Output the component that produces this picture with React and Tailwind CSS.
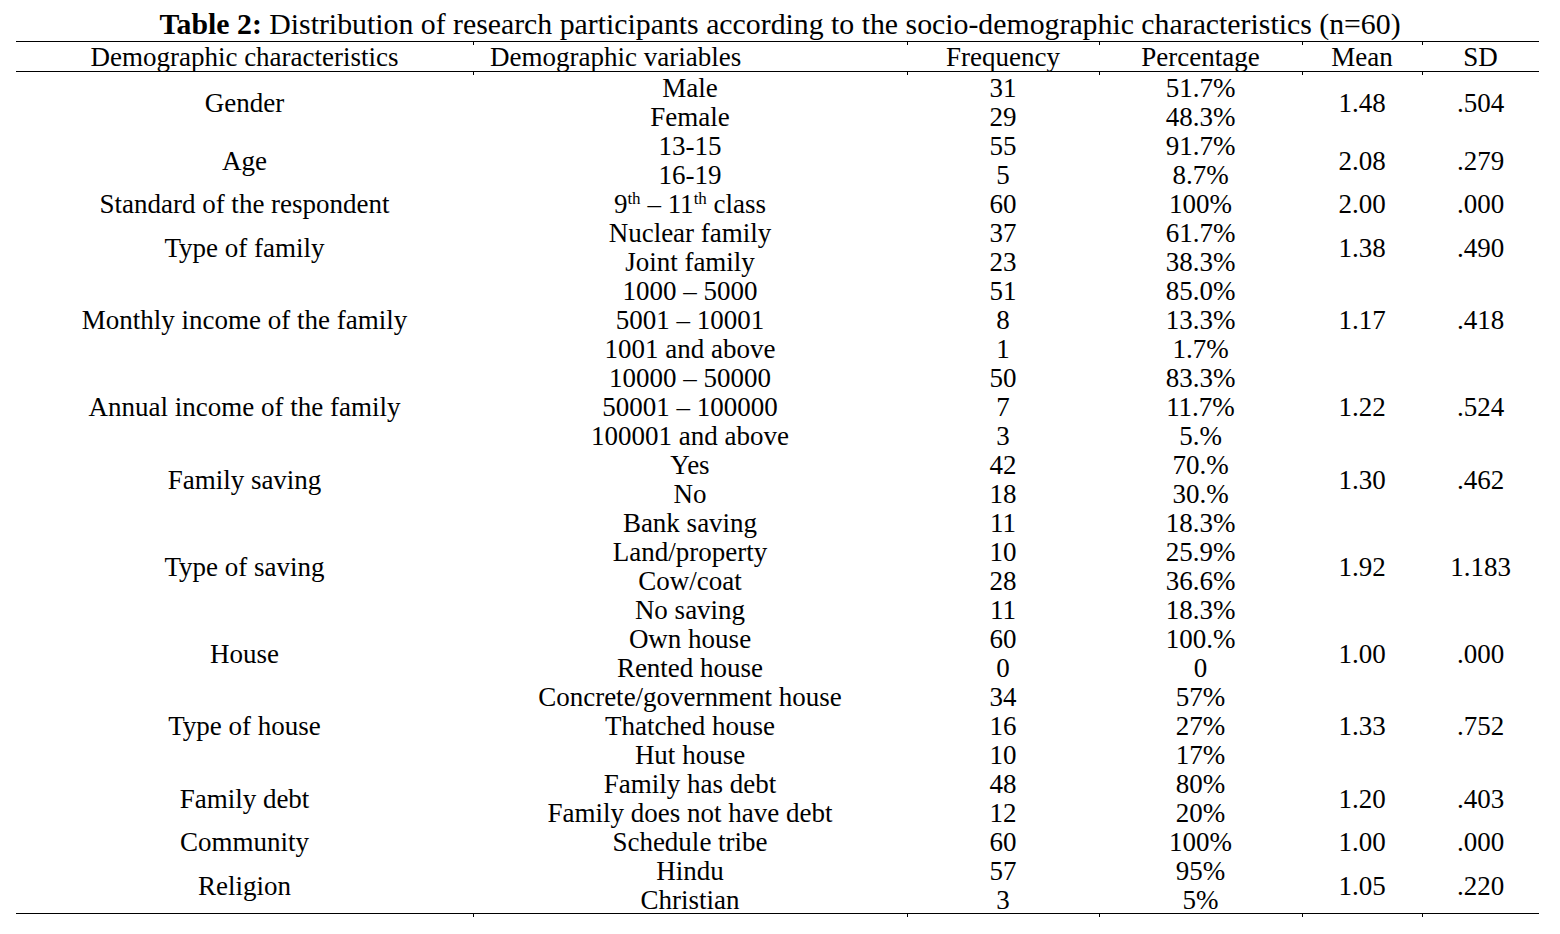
import React from "react";

const groups = [
  { label: "Gender", mean: "1.48", sd: ".504", rows: [["Male", "31", "51.7%"], ["Female", "29", "48.3%"]] },
  { label: "Age", mean: "2.08", sd: ".279", rows: [["13-15", "55", "91.7%"], ["16-19", "5", "8.7%"]] },
  { label: "Standard of the respondent", mean: "2.00", sd: ".000", rows: [["__class", "60", "100%"]] },
  { label: "Type of family", mean: "1.38", sd: ".490", rows: [["Nuclear family", "37", "61.7%"], ["Joint family", "23", "38.3%"]] },
  { label: "Monthly income of the family", mean: "1.17", sd: ".418", rows: [["1000 – 5000", "51", "85.0%"], ["5001 – 10001", "8", "13.3%"], ["1001 and above", "1", "1.7%"]] },
  { label: "Annual income of the family", mean: "1.22", sd: ".524", rows: [["10000 – 50000", "50", "83.3%"], ["50001 – 100000", "7", "11.7%"], ["100001 and above", "3", "5.%"]] },
  { label: "Family saving", mean: "1.30", sd: ".462", rows: [["Yes", "42", "70.%"], ["No", "18", "30.%"]] },
  { label: "Type of saving", mean: "1.92", sd: "1.183", rows: [["Bank saving", "11", "18.3%"], ["Land/property", "10", "25.9%"], ["Cow/coat", "28", "36.6%"], ["No saving", "11", "18.3%"]] },
  { label: "House", mean: "1.00", sd: ".000", rows: [["Own house", "60", "100.%"], ["Rented house", "0", "0"]] },
  { label: "Type of house", mean: "1.33", sd: ".752", rows: [["Concrete/government house", "34", "57%"], ["Thatched house", "16", "27%"], ["Hut house", "10", "17%"]] },
  { label: "Family debt", mean: "1.20", sd: ".403", rows: [["Family has debt", "48", "80%"], ["Family does not have debt", "12", "20%"]] },
  { label: "Community", mean: "1.00", sd: ".000", rows: [["Schedule tribe", "60", "100%"]] },
  { label: "Religion", mean: "1.05", sd: ".220", rows: [["Hindu", "57", "95%"], ["Christian", "3", "5%"]] },
];

function Tick() {
  return <span className="absolute right-[-1px] top-[-1px] w-px h-[4px] bg-black" />;
}
function TickBottom() {
  return <span className="absolute right-[-1px] bottom-[-4px] w-px h-[4px] bg-black" />;
}

function Variable({ v }) {
  if (v === "__class") {
    return (
      <span>
        9<sup className="text-[17px] top-[-9px]">th</sup> – 11<sup className="text-[17px] top-[-9px]">th</sup> class
      </span>
    );
  }
  return v;
}

export default function App() {
  const cell = "h-[29px] p-0 pt-[3px] text-center align-middle leading-[26px] whitespace-nowrap";
  const head = "relative h-[29px] p-0 pt-[2px] font-normal leading-[27px]";
  return (
    <div
      className="w-[1560px] h-[934px] bg-white text-black"
      style={{ fontFamily: '"Liberation Serif", "Times New Roman", serif' }}
    >
      <div className="h-[41px] flex items-center justify-center text-[29.8px] leading-none pt-[7px]">
        <span>
          <b>Table 2:</b> Distribution of research participants according to the socio-demographic characteristics (n=60)
        </span>
      </div>
      <table className="ml-[16px] w-[1523px] table-fixed border-collapse text-[27px]">
        <colgroup>
          <col className="w-[457px]" />
          <col className="w-[434px]" />
          <col className="w-[192px]" />
          <col className="w-[203px]" />
          <col className="w-[120px]" />
          <col className="w-[117px]" />
        </colgroup>
        <thead>
          <tr className="border-t border-b border-black">
            <th className={head + " text-center"}>Demographic characteristics<Tick /><TickBottom /></th>
            <th className={head + " pl-[17px] text-left"}>Demographic variables<Tick /><TickBottom /></th>
            <th className={head + " text-center"}>Frequency<Tick /><TickBottom /></th>
            <th className={head + " text-center"}>Percentage<Tick /><TickBottom /></th>
            <th className={head + " text-center"}>Mean<Tick /><TickBottom /></th>
            <th className={head + " text-center"}>SD</th>
          </tr>
        </thead>
        <tbody>
          {groups.map((g, gi) =>
            g.rows.map((r, ri) => {
              const last = gi === groups.length - 1 && ri === g.rows.length - 1;
              return (
                <tr key={gi + "-" + ri} className={last ? "border-b border-black" : ""}>
                  {ri === 0 && (
                    <td rowSpan={g.rows.length} className={cell + " relative"}>
                      {g.label}
                      {gi === groups.length - 1 && <TickBottom />}
                    </td>
                  )}
                  <td className={cell + " relative"}>
                    <Variable v={r[0]} />
                    {last && <TickBottom />}
                  </td>
                  <td className={cell + " relative"}>
                    {r[1]}
                    {last && <TickBottom />}
                  </td>
                  <td className={cell + " relative"}>
                    {r[2]}
                    {last && <TickBottom />}
                  </td>
                  {ri === 0 && (
                    <td rowSpan={g.rows.length} className={cell + " relative"}>
                      {g.mean}
                      {gi === groups.length - 1 && <TickBottom />}
                    </td>
                  )}
                  {ri === 0 && (
                    <td rowSpan={g.rows.length} className={cell}>
                      {g.sd}
                    </td>
                  )}
                </tr>
              );
            })
          )}
        </tbody>
      </table>
    </div>
  );
}
